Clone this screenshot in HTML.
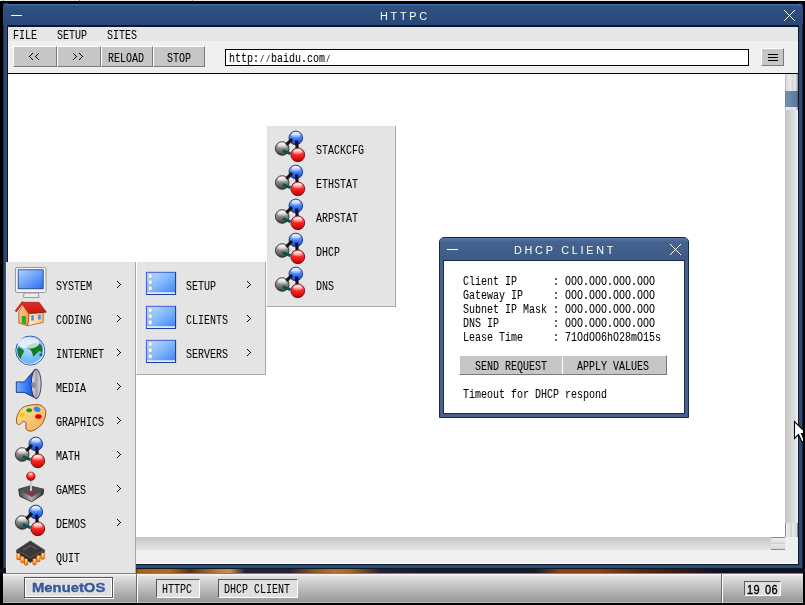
<!DOCTYPE html>
<html><head><meta charset="utf-8">
<style>
*{margin:0;padding:0;box-sizing:border-box}
html,body{width:805px;height:605px;overflow:hidden;background:#000;position:relative}
.a{position:absolute}
.t{position:absolute;font-family:"Liberation Mono",monospace;font-size:10px;line-height:10px;white-space:pre;color:#000;transform:translateY(0.5px) scaleY(1.2);transform-origin:0 0;filter:grayscale(1);-webkit-text-stroke:0.05px #000}
.z{font-family:"Liberation Sans",sans-serif;font-size:9.6px;letter-spacing:0.66px;display:inline-block;width:6px;text-align:left}
.sl{display:inline-block;width:6px;font-size:7px;line-height:7px;text-indent:1px}
.tt{position:absolute;font-family:"Liberation Sans",sans-serif;font-size:10px;line-height:10px;white-space:pre;color:#fff;letter-spacing:2.55px;transform:scaleX(1.08);transform-origin:0 0;filter:grayscale(1)}
.btn{position:absolute;background:#c6c6c6;border-top:1px solid #fff;border-left:1px solid #fff;border-right:1px solid #7a7a7a;border-bottom:1px solid #7a7a7a}
.menu{position:absolute;background:#e4e4e4;border-right:1px solid #a8a8a8;border-bottom:1px solid #a8a8a8}
.tb{position:absolute;background:linear-gradient(#2b4a7a,#2b4a7a)}
</style></head><body>
<!-- top row -->
<div class="a" style="left:0;top:0;width:805px;height:1px;background:#ededed"></div>
<div class="a" style="left:3px;top:0;width:1px;height:1px;background:#999"></div><div class="a" style="left:79px;top:0;width:1px;height:1px;background:#999"></div><div class="a" style="left:192px;top:0;width:1px;height:1px;background:#aaa"></div>
<!-- wallpaper strip -->
<div class="a" style="left:0;top:569px;width:805px;height:4px;background:linear-gradient(90deg,#101018 0,#101018 134px,#a85a18 138px,#b8681e 170px,#5a3018 190px,#b07838 215px,#c89050 230px,#2a2035 245px,#2a2035 290px,#8a5a28 315px,#b87028 335px,#a86828 350px,#2a2030 380px,#1a1a2a 420px,#181a28 535px,#8a4212 560px,#8a4212 600px,#5a2810 640px,#3a1a14 680px,#101020 720px,#101020 805px)"></div>

<!-- MAIN WINDOW -->
<div class="a" style="left:3px;top:3px;width:5px;height:5px;background:#0b3a8a"></div>
<div class="a" style="left:798px;top:3px;width:5px;height:5px;background:#02205a"></div>
<div class="a" style="left:3px;top:4px;width:800px;height:565px;background:linear-gradient(90deg,#1a2e4a 0,#1a2e4a 1px,#2c4a74 1px,#2c4a74 799px,#16243a 799px);border-radius:5px 5px 0 0"></div>
<div class="a" style="left:3px;top:568px;width:800px;height:1px;background:#0c1a2e"></div>
<div class="a" style="left:3px;top:4px;width:800px;height:21px;border-radius:4px 4px 0 0;background:linear-gradient(#3e6aa6 0,#3e6aa6 1px,#2f5283 2px,#284777 21px)"></div>
<!-- title -->
<div class="a" style="left:11px;top:15px;width:11px;height:1px;background:#fff"></div>
<div class="tt" style="left:380px;top:12px">HTTPC</div>
<svg class="a" style="left:783px;top:9px" width="13" height="13" viewBox="0 0 13 13"><path d="M1 1L12 12M12 1L1 12" stroke="#fff" stroke-width="1"/></svg>
<!-- dark inner frame -->
<div class="a" style="left:7px;top:25px;width:792px;height:540px;background:#0a1830"></div>
<!-- menubar -->
<div class="a" style="left:8px;top:27px;width:790px;height:14px;background:#e6e6e6"></div>
<div class="t" style="left:13px;top:30px">FILE</div>
<div class="t" style="left:57px;top:30px">SETUP</div>
<div class="t" style="left:107px;top:30px">SITES</div>
<!-- toolbar -->
<div class="a" style="left:8px;top:41px;width:790px;height:32px;background:#efefef"></div>
<div class="btn" style="left:13px;top:46px;width:44px;height:21px"></div>
<div class="btn" style="left:57px;top:46px;width:44px;height:21px"></div>
<div class="btn" style="left:101px;top:46px;width:52px;height:21px"></div>
<div class="btn" style="left:153px;top:46px;width:52px;height:21px"></div>
<svg class="a" style="left:0;top:0" width="805" height="605"><path d="M32 53h1v1h-1zM31 54h1v1h-1zM30 55h1v1h-1zM29 56h1v1h-1zM30 57h1v1h-1zM31 58h1v1h-1zM32 59h1v1h-1zM38 53h1v1h-1zM37 54h1v1h-1zM36 55h1v1h-1zM35 56h1v1h-1zM36 57h1v1h-1zM37 58h1v1h-1zM38 59h1v1h-1zM73 53h1v1h-1zM74 54h1v1h-1zM75 55h1v1h-1zM76 56h1v1h-1zM75 57h1v1h-1zM74 58h1v1h-1zM73 59h1v1h-1zM79 53h1v1h-1zM80 54h1v1h-1zM81 55h1v1h-1zM82 56h1v1h-1zM81 57h1v1h-1zM80 58h1v1h-1zM79 59h1v1h-1z" fill="#000"/></svg>
<div class="t" style="left:108px;top:53px">RELOAD</div>
<div class="t" style="left:167px;top:53px">STOP</div>
<div class="a" style="left:225px;top:49px;width:524px;height:17px;background:#fff;border:1px solid #000"></div>
<div class="t" style="left:229px;top:53px">http:<span class="sl">/</span><span class="sl">/</span>baidu.com<span class="sl">/</span></div>
<div class="btn" style="left:761px;top:48px;width:23px;height:18px"></div>
<div class="a" style="left:768px;top:54px;width:10px;height:1px;background:#000;box-shadow:0 0 0.6px #000"></div>
<div class="a" style="left:768px;top:57px;width:10px;height:1px;background:#000;box-shadow:0 0 0.6px #000"></div>
<div class="a" style="left:768px;top:60px;width:10px;height:1px;background:#000;box-shadow:0 0 0.6px #000"></div>
<div class="a" style="left:8px;top:73px;width:790px;height:1px;background:#000"></div>
<!-- content -->
<div class="a" style="left:8px;top:74px;width:777px;height:463px;background:#fff"></div>
<!-- vscroll -->
<div class="a" style="left:785px;top:74px;width:13px;height:463px;background:linear-gradient(90deg,#bdbdbd 0,#c8c8c8 1px,#d8d8d8 7px,#e2e2e2 11px,#f0f0f0 12px)"></div>
<div class="a" style="left:785px;top:74px;width:13px;height:17px;background:linear-gradient(90deg,#a0a0a0 0,#dcdcdc 1px,#ececec 6px,#d8d8d8 7px,#e8e8e8 11px,#a0a0a0 12px)"></div>
<div class="a" style="left:785px;top:91px;width:13px;height:16px;background:linear-gradient(90deg,#6e6e6e 0,#7290b8 1px,#5e7696 12px,#505050 13px)"></div>
<div class="a" style="left:785px;top:107px;width:13px;height:3px;background:linear-gradient(90deg,#a0a0a0 0,#f0f0f0 1px,#e0e0e0 7px,#e8e8e8 11px,#a0a0a0 12px)"></div>
<div class="a" style="left:785px;top:523px;width:13px;height:14px;background:linear-gradient(90deg,#8c8c8c 0,#8c8c8c 1px,#ececec 1px,#dedede 6px,#cfcfcf 6px,#cfcfcf 7px,#e8e8e8 7px,#d8d8d8 12px,#8c8c8c 12px)"></div>
<!-- hscroll -->
<div class="a" style="left:8px;top:537px;width:777px;height:13px;background:linear-gradient(#c4c4c4,#d6d6d6 7px,#e4e4e4 13px)"></div>
<div class="a" style="left:771px;top:537px;width:14px;height:13px;background:linear-gradient(#8c8c8c 0,#8c8c8c 1px,#ececec 1px,#dedede 6px,#cfcfcf 6px,#cfcfcf 7px,#e8e8e8 7px,#d8d8d8 12px,#8c8c8c 12px)"></div>
<div class="a" style="left:785px;top:537px;width:13px;height:13px;background:#efefef"></div>
<!-- status bar -->
<div class="a" style="left:8px;top:550px;width:790px;height:14px;background:#efefef;border-bottom:1px solid #fafafa"></div>

<!-- MENU 1 -->
<div class="menu" style="left:6px;top:262px;width:130px;height:312px;border-left:1px solid #f4f4f4"></div>
<div class="t" style="left:56px;top:281px">SYSTEM</div>
<div class="t" style="left:56px;top:315px">CODING</div>
<div class="t" style="left:56px;top:349px">INTERNET</div>
<div class="t" style="left:56px;top:383px">MEDIA</div>
<div class="t" style="left:56px;top:417px">GRAPHICS</div>
<div class="t" style="left:56px;top:451px">MATH</div>
<div class="t" style="left:56px;top:485px">GAMES</div>
<div class="t" style="left:56px;top:519px">DEMOS</div>
<div class="t" style="left:56px;top:553px">QUIT</div>

<!-- MENU 2 -->
<div class="menu" style="left:136px;top:262px;width:130px;height:113px;border-left:1px solid #fff"></div>
<div class="t" style="left:186px;top:281px">SETUP</div>
<div class="t" style="left:186px;top:315px">CLIENTS</div>
<div class="t" style="left:186px;top:349px">SERVERS</div>

<!-- MENU 3 -->
<div class="menu" style="left:266px;top:126px;width:130px;height:181px;border-left:1px solid #fff"></div>
<div class="t" style="left:316px;top:145px">STACKCFG</div>
<div class="t" style="left:316px;top:179px">ETHSTAT</div>
<div class="t" style="left:316px;top:213px">ARPSTAT</div>
<div class="t" style="left:316px;top:247px">DHCP</div>
<div class="t" style="left:316px;top:281px">DNS</div>

<!-- ICONS -->
<svg width="0" height="0" style="position:absolute">
<defs>
<radialGradient id="gBlue" cx="0.5" cy="0.22" r="0.8"><stop offset="0" stop-color="#ffffff"/><stop offset="0.18" stop-color="#b0d0ff"/><stop offset="0.5" stop-color="#4a88ff"/><stop offset="0.85" stop-color="#1848e0"/><stop offset="1" stop-color="#0a2890"/></radialGradient>
<radialGradient id="gRed" cx="0.5" cy="0.22" r="0.8"><stop offset="0" stop-color="#ffffff"/><stop offset="0.18" stop-color="#ffa0a0"/><stop offset="0.5" stop-color="#ff2a2a"/><stop offset="0.85" stop-color="#d80000"/><stop offset="1" stop-color="#780000"/></radialGradient>
<radialGradient id="gGray" cx="0.5" cy="0.22" r="0.8"><stop offset="0" stop-color="#ffffff"/><stop offset="0.2" stop-color="#d0d0d0"/><stop offset="0.55" stop-color="#787878"/><stop offset="0.9" stop-color="#404040"/><stop offset="1" stop-color="#202020"/></radialGradient>
<linearGradient id="gScreen" x1="0" y1="0" x2="1" y2="1"><stop offset="0" stop-color="#b0d4ff"/><stop offset="1" stop-color="#2a6ef0"/></linearGradient>
<linearGradient id="gFolder" x1="0" y1="0" x2="1" y2="1"><stop offset="0" stop-color="#c0e0ff"/><stop offset="0.5" stop-color="#80b8ff"/><stop offset="1" stop-color="#3a80f0"/></linearGradient>
<radialGradient id="gOcean" cx="0.45" cy="0.45" r="0.55"><stop offset="0" stop-color="#b0dcff"/><stop offset="0.85" stop-color="#6ab4f4"/><stop offset="1" stop-color="#e8f6ff"/></radialGradient>
<linearGradient id="gCone" x1="0" y1="0" x2="1" y2="0"><stop offset="0" stop-color="#70b0ff"/><stop offset="0.6" stop-color="#2a70f0"/><stop offset="1" stop-color="#0a30b0"/></linearGradient>
<linearGradient id="gFace" x1="0" y1="0" x2="1" y2="0"><stop offset="0" stop-color="#f0f0f0"/><stop offset="0.5" stop-color="#a0a0a8"/><stop offset="1" stop-color="#e0e0e0"/></linearGradient>
<linearGradient id="gPal" x1="0" y1="0" x2="1" y2="1"><stop offset="0" stop-color="#ffe0a0"/><stop offset="1" stop-color="#f0b050"/></linearGradient>
<linearGradient id="gBase" x1="0" y1="0" x2="1" y2="0"><stop offset="0" stop-color="#404040"/><stop offset="0.5" stop-color="#b0b0b0"/><stop offset="1" stop-color="#303030"/></linearGradient>
<linearGradient id="gGold" x1="0" y1="0" x2="0" y2="1"><stop offset="0" stop-color="#fff4a0"/><stop offset="0.5" stop-color="#ffd030"/><stop offset="1" stop-color="#f07000"/></linearGradient>
<linearGradient id="gWall" x1="0" y1="0" x2="1" y2="1"><stop offset="0" stop-color="#ffd090"/><stop offset="1" stop-color="#f09040"/></linearGradient>
<linearGradient id="gSide" x1="0" y1="0" x2="1" y2="0"><stop offset="0" stop-color="#fff0d8"/><stop offset="1" stop-color="#ffc070"/></linearGradient>
<linearGradient id="gRoof" x1="0" y1="0" x2="0" y2="1"><stop offset="0" stop-color="#e03020"/><stop offset="1" stop-color="#c01810"/></linearGradient>
<linearGradient id="mG" x1="0" y1="0" x2="0" y2="1"><stop offset="0" stop-color="#f0f0f0"/><stop offset="0.45" stop-color="#909090"/><stop offset="1" stop-color="#383838"/></linearGradient><linearGradient id="mB" x1="0" y1="0" x2="0" y2="1"><stop offset="0" stop-color="#b8d4ff"/><stop offset="0.45" stop-color="#4a88ff"/><stop offset="1" stop-color="#1040d8"/></linearGradient><linearGradient id="mR" x1="0" y1="0" x2="0" y2="1"><stop offset="0" stop-color="#ffc0c0"/><stop offset="0.45" stop-color="#ff2a2a"/><stop offset="1" stop-color="#c00000"/></linearGradient><linearGradient id="mH" x1="0" y1="0" x2="0" y2="1"><stop offset="0" stop-color="#fff" stop-opacity="0.95"/><stop offset="1" stop-color="#fff" stop-opacity="0.1"/></linearGradient></defs></svg>
<svg class="a" style="left:14px;top:266px" width="34" height="34" viewBox="0 0 34 34"><rect x="1.5" y="1.5" width="30.5" height="25" rx="1.5" fill="#f4f4f4" stroke="#9a9a9a" stroke-width="1"/><rect x="4.2" y="3.8" width="25" height="19" fill="url(#gScreen)" stroke="#1a3a90" stroke-width="0.8"/><path d="M10 27L24.5 27L25 31.5L9.5 31.5Z" fill="#ececec" stroke="#9a9a9a" stroke-width="1"/></svg>
<svg class="a" style="left:14px;top:300px" width="34" height="34" viewBox="0 0 34 34"><path d="M4.8 11.8L9.2 4.8L15.2 13.5L13.9 25.8L4.8 23.1Z" fill="url(#gWall)" stroke="#903010" stroke-width="0.6"/><path d="M15.2 13.5L29.2 12.5L29.2 22.4L13.9 25.8Z" fill="url(#gSide)" stroke="#903010" stroke-width="0.6"/><path d="M7.9 15.8L11.9 16.6L11.9 24.4L7.9 23.3Z" fill="#20b020"/><rect x="17.2" y="15.2" width="2.6" height="5.3" fill="#3a90f0"/><rect x="24.1" y="14.8" width="2.6" height="4.7" fill="#3a90f0"/><path d="M8.2 2.3L25.1 2.3L32.4 12.2L15.2 13.5Z" fill="url(#gRoof)" stroke="#801010" stroke-width="0.6"/><path d="M1.6 11.6L8.4 2.6L15.2 13" fill="none" stroke="#d02818" stroke-width="2.4" stroke-linejoin="round"/></svg>
<svg class="a" style="left:14px;top:334px" width="34" height="34" viewBox="0 0 34 34"><circle cx="16.3" cy="16.6" r="14.5" fill="url(#gOcean)" stroke="#2a3ab0" stroke-width="0.9"/><path d="M3.5 13C6 13.5 9 15 10 17C10 19 8 20 7.5 22C7 24 6.5 25 6 25.5C4.5 23 3 20 2.5 17Z" fill="#137a28"/><path d="M12 14C13 11 17 9.5 22 9.5C25 9.5 27 10 28 12C28.5 15 28.5 17 28 19C27 17.5 25.5 17 24.5 17.5C23 19 21 21 19.5 23C18.5 20 18 17 16 15.5C14.5 15 13 15 12 14Z" fill="#137a28"/><circle cx="27" cy="20.8" r="1.6" fill="#137a28"/><ellipse cx="14.5" cy="9" rx="11" ry="5.8" fill="#ffffff" opacity="0.72"/><path d="M11 29.2C13.5 30 17 30 19.5 29.2" stroke="#30c030" stroke-width="1.2" fill="none"/><circle cx="16.3" cy="16.6" r="13.6" fill="none" stroke="#e8f4ff" stroke-width="0.8" opacity="0.8"/></svg>
<svg class="a" style="left:14px;top:368px" width="34" height="34" viewBox="0 0 34 34"><path d="M2.3 13.9L10.2 13.9L21.1 1.3L22.4 30.4L10.2 24.4L2.3 24.4Z" fill="url(#gCone)" stroke="#0a1a60" stroke-width="0.8"/><ellipse cx="22.2" cy="15.9" rx="4.9" ry="14.7" fill="url(#gFace)" stroke="#1a1a40" stroke-width="0.8"/><ellipse cx="19.6" cy="17" rx="2.2" ry="3" fill="#8a8a9a"/></svg>
<svg class="a" style="left:14px;top:402px" width="34" height="34" viewBox="0 0 34 34"><path d="M4.6 10.6C7 6 10 4.5 12.5 4C18 2.5 24 2 27 3.5C31 5.5 32.5 9 31.7 12C31 17 29 21 27.1 23.1C23 27 19 29.5 15.8 29.1C13 28.5 11.7 27 11.9 25.8C12 23 12.5 21 11.2 19.8C10 18.8 8.5 19.5 7.9 20.5C6 23 4 23 3 21.5C1.8 19 2.5 14 4.6 10.6Z" fill="url(#gPal)" stroke="#904010" stroke-width="0.9"/><ellipse cx="7.9" cy="12.9" rx="2.8" ry="2.3" fill="#f0d000"/><ellipse cx="15.2" cy="8.2" rx="2.8" ry="2" fill="#10a010"/><ellipse cx="23.1" cy="7.3" rx="3.5" ry="2.5" fill="#3a80f0" transform="rotate(20 23.1 7.3)"/><ellipse cx="24.4" cy="14.5" rx="3.2" ry="2.3" fill="#e00000"/></svg>
<svg class="a" style="left:14px;top:436px" width="34" height="34" viewBox="0 0 34 34"><circle cx="8.2" cy="18.5" r="6.8" fill="url(#mG)" stroke="#1a1a1a" stroke-width="0.8"/><ellipse cx="8.2" cy="15.64" rx="4.22" ry="2.72" fill="url(#mH)"/><circle cx="21.8" cy="7.9" r="6.8" fill="url(#mB)" stroke="#0a1a70" stroke-width="0.8"/><ellipse cx="21.8" cy="5.04" rx="4.22" ry="2.72" fill="url(#mH)"/><path d="M12.3 14.8L18 9.2" stroke="#141414" stroke-width="3.2"/><path d="M22.6 10.5L23.2 19" stroke="#141414" stroke-width="3.2"/><path d="M8.8 20.6L16.5 23.6" stroke="#0a5252" stroke-width="3"/><circle cx="23.8" cy="24.8" r="6.9" fill="url(#mR)" stroke="#5a0000" stroke-width="0.8"/><ellipse cx="23.8" cy="21.90" rx="4.28" ry="2.76" fill="url(#mH)"/></svg>
<svg class="a" style="left:14px;top:470px" width="34" height="34" viewBox="0 0 34 34"><path d="M4.6 19.2L15.8 15.9L29.7 19.2L29 24.4L17.8 31.7L5.9 26.4Z" fill="url(#gBase)" stroke="#202020" stroke-width="0.8"/><path d="M4.6 19.2L15.8 15.9L29.7 19.2L17.8 27.1Z" fill="#505050"/><rect x="16" y="9" width="2" height="12" fill="#c8c8d0"/><ellipse cx="17.2" cy="22.8" rx="2.8" ry="1.4" fill="#e01010"/><circle cx="16.8" cy="6.3" r="4.3" fill="url(#gRed)" stroke="#600000" stroke-width="0.5"/></svg>
<svg class="a" style="left:14px;top:504px" width="34" height="34" viewBox="0 0 34 34"><circle cx="8.2" cy="18.5" r="6.8" fill="url(#mG)" stroke="#1a1a1a" stroke-width="0.8"/><ellipse cx="8.2" cy="15.64" rx="4.22" ry="2.72" fill="url(#mH)"/><circle cx="21.8" cy="7.9" r="6.8" fill="url(#mB)" stroke="#0a1a70" stroke-width="0.8"/><ellipse cx="21.8" cy="5.04" rx="4.22" ry="2.72" fill="url(#mH)"/><path d="M12.3 14.8L18 9.2" stroke="#141414" stroke-width="3.2"/><path d="M22.6 10.5L23.2 19" stroke="#141414" stroke-width="3.2"/><path d="M8.8 20.6L16.5 23.6" stroke="#0a5252" stroke-width="3"/><circle cx="23.8" cy="24.8" r="6.9" fill="url(#mR)" stroke="#5a0000" stroke-width="0.8"/><ellipse cx="23.8" cy="21.90" rx="4.28" ry="2.76" fill="url(#mH)"/></svg>
<svg class="a" style="left:14px;top:538px" width="34" height="34" viewBox="0 0 34 34"><path d="M2.5 12.1L2.5 14.6L16.3 24.7L30.6 14.6L30.6 12.1L16.3 3.1Z" fill="#2a2a2a" stroke="#5a5a5a" stroke-width="0.7"/><rect x="2.9" y="15.3" width="3.2" height="6.4" rx="1.2" fill="url(#gGold)" stroke="#d03000" stroke-width="0.7"/><rect x="6.800000000000001" y="18.400000000000002" width="3.2" height="6.4" rx="1.2" fill="url(#gGold)" stroke="#d03000" stroke-width="0.7"/><rect x="10.5" y="20.7" width="3.2" height="6.4" rx="1.2" fill="url(#gGold)" stroke="#d03000" stroke-width="0.7"/><rect x="18.9" y="20.400000000000002" width="3.2" height="6.4" rx="1.2" fill="url(#gGold)" stroke="#d03000" stroke-width="0.7"/><rect x="22.799999999999997" y="17.3" width="3.2" height="6.4" rx="1.2" fill="url(#gGold)" stroke="#d03000" stroke-width="0.7"/><rect x="27.099999999999998" y="14.8" width="3.2" height="6.4" rx="1.2" fill="url(#gGold)" stroke="#d03000" stroke-width="0.7"/><path d="M2.5 12.1L16.3 3.1L30.6 12.1L16.3 19.7Z" fill="#383838" stroke="#6a6a6a" stroke-width="0.8"/><path d="M9 12L16.5 7.5L23 11.5" stroke="#555" stroke-width="1.5" fill="none"/></svg>
<svg class="a" style="left:144px;top:266px" width="34" height="34" viewBox="0 0 34 34"><rect x="2.4" y="6.3" width="29.2" height="22.2" fill="url(#gFolder)" stroke="#3050d8" stroke-width="0.9"/><path d="M31.6 6.3V28.5H2.4" stroke="#1838a8" stroke-width="0.9" fill="none"/><rect x="3" y="26.3" width="28" height="1.6" fill="#f4f0ea"/><rect x="4.4" y="8" width="3.6" height="4.2" rx="0.8" fill="#fafafa" stroke="#a09a94" stroke-width="0.5"/><rect x="4.4" y="14.1" width="3.6" height="4.2" rx="0.8" fill="#fafafa" stroke="#a09a94" stroke-width="0.5"/><rect x="4.4" y="20.2" width="3.6" height="4.2" rx="0.8" fill="#fafafa" stroke="#a09a94" stroke-width="0.5"/></svg>
<svg class="a" style="left:144px;top:300px" width="34" height="34" viewBox="0 0 34 34"><rect x="2.4" y="6.3" width="29.2" height="22.2" fill="url(#gFolder)" stroke="#3050d8" stroke-width="0.9"/><path d="M31.6 6.3V28.5H2.4" stroke="#1838a8" stroke-width="0.9" fill="none"/><rect x="3" y="26.3" width="28" height="1.6" fill="#f4f0ea"/><rect x="4.4" y="8" width="3.6" height="4.2" rx="0.8" fill="#fafafa" stroke="#a09a94" stroke-width="0.5"/><rect x="4.4" y="14.1" width="3.6" height="4.2" rx="0.8" fill="#fafafa" stroke="#a09a94" stroke-width="0.5"/><rect x="4.4" y="20.2" width="3.6" height="4.2" rx="0.8" fill="#fafafa" stroke="#a09a94" stroke-width="0.5"/></svg>
<svg class="a" style="left:144px;top:334px" width="34" height="34" viewBox="0 0 34 34"><rect x="2.4" y="6.3" width="29.2" height="22.2" fill="url(#gFolder)" stroke="#3050d8" stroke-width="0.9"/><path d="M31.6 6.3V28.5H2.4" stroke="#1838a8" stroke-width="0.9" fill="none"/><rect x="3" y="26.3" width="28" height="1.6" fill="#f4f0ea"/><rect x="4.4" y="8" width="3.6" height="4.2" rx="0.8" fill="#fafafa" stroke="#a09a94" stroke-width="0.5"/><rect x="4.4" y="14.1" width="3.6" height="4.2" rx="0.8" fill="#fafafa" stroke="#a09a94" stroke-width="0.5"/><rect x="4.4" y="20.2" width="3.6" height="4.2" rx="0.8" fill="#fafafa" stroke="#a09a94" stroke-width="0.5"/></svg>
<svg class="a" style="left:274px;top:130px" width="34" height="34" viewBox="0 0 34 34"><circle cx="8.2" cy="18.5" r="6.8" fill="url(#mG)" stroke="#1a1a1a" stroke-width="0.8"/><ellipse cx="8.2" cy="15.64" rx="4.22" ry="2.72" fill="url(#mH)"/><circle cx="21.8" cy="7.9" r="6.8" fill="url(#mB)" stroke="#0a1a70" stroke-width="0.8"/><ellipse cx="21.8" cy="5.04" rx="4.22" ry="2.72" fill="url(#mH)"/><path d="M12.3 14.8L18 9.2" stroke="#141414" stroke-width="3.2"/><path d="M22.6 10.5L23.2 19" stroke="#141414" stroke-width="3.2"/><path d="M8.8 20.6L16.5 23.6" stroke="#0a5252" stroke-width="3"/><circle cx="23.8" cy="24.8" r="6.9" fill="url(#mR)" stroke="#5a0000" stroke-width="0.8"/><ellipse cx="23.8" cy="21.90" rx="4.28" ry="2.76" fill="url(#mH)"/></svg>
<svg class="a" style="left:274px;top:164px" width="34" height="34" viewBox="0 0 34 34"><circle cx="8.2" cy="18.5" r="6.8" fill="url(#mG)" stroke="#1a1a1a" stroke-width="0.8"/><ellipse cx="8.2" cy="15.64" rx="4.22" ry="2.72" fill="url(#mH)"/><circle cx="21.8" cy="7.9" r="6.8" fill="url(#mB)" stroke="#0a1a70" stroke-width="0.8"/><ellipse cx="21.8" cy="5.04" rx="4.22" ry="2.72" fill="url(#mH)"/><path d="M12.3 14.8L18 9.2" stroke="#141414" stroke-width="3.2"/><path d="M22.6 10.5L23.2 19" stroke="#141414" stroke-width="3.2"/><path d="M8.8 20.6L16.5 23.6" stroke="#0a5252" stroke-width="3"/><circle cx="23.8" cy="24.8" r="6.9" fill="url(#mR)" stroke="#5a0000" stroke-width="0.8"/><ellipse cx="23.8" cy="21.90" rx="4.28" ry="2.76" fill="url(#mH)"/></svg>
<svg class="a" style="left:274px;top:198px" width="34" height="34" viewBox="0 0 34 34"><circle cx="8.2" cy="18.5" r="6.8" fill="url(#mG)" stroke="#1a1a1a" stroke-width="0.8"/><ellipse cx="8.2" cy="15.64" rx="4.22" ry="2.72" fill="url(#mH)"/><circle cx="21.8" cy="7.9" r="6.8" fill="url(#mB)" stroke="#0a1a70" stroke-width="0.8"/><ellipse cx="21.8" cy="5.04" rx="4.22" ry="2.72" fill="url(#mH)"/><path d="M12.3 14.8L18 9.2" stroke="#141414" stroke-width="3.2"/><path d="M22.6 10.5L23.2 19" stroke="#141414" stroke-width="3.2"/><path d="M8.8 20.6L16.5 23.6" stroke="#0a5252" stroke-width="3"/><circle cx="23.8" cy="24.8" r="6.9" fill="url(#mR)" stroke="#5a0000" stroke-width="0.8"/><ellipse cx="23.8" cy="21.90" rx="4.28" ry="2.76" fill="url(#mH)"/></svg>
<svg class="a" style="left:274px;top:232px" width="34" height="34" viewBox="0 0 34 34"><circle cx="8.2" cy="18.5" r="6.8" fill="url(#mG)" stroke="#1a1a1a" stroke-width="0.8"/><ellipse cx="8.2" cy="15.64" rx="4.22" ry="2.72" fill="url(#mH)"/><circle cx="21.8" cy="7.9" r="6.8" fill="url(#mB)" stroke="#0a1a70" stroke-width="0.8"/><ellipse cx="21.8" cy="5.04" rx="4.22" ry="2.72" fill="url(#mH)"/><path d="M12.3 14.8L18 9.2" stroke="#141414" stroke-width="3.2"/><path d="M22.6 10.5L23.2 19" stroke="#141414" stroke-width="3.2"/><path d="M8.8 20.6L16.5 23.6" stroke="#0a5252" stroke-width="3"/><circle cx="23.8" cy="24.8" r="6.9" fill="url(#mR)" stroke="#5a0000" stroke-width="0.8"/><ellipse cx="23.8" cy="21.90" rx="4.28" ry="2.76" fill="url(#mH)"/></svg>
<svg class="a" style="left:274px;top:266px" width="34" height="34" viewBox="0 0 34 34"><circle cx="8.2" cy="18.5" r="6.8" fill="url(#mG)" stroke="#1a1a1a" stroke-width="0.8"/><ellipse cx="8.2" cy="15.64" rx="4.22" ry="2.72" fill="url(#mH)"/><circle cx="21.8" cy="7.9" r="6.8" fill="url(#mB)" stroke="#0a1a70" stroke-width="0.8"/><ellipse cx="21.8" cy="5.04" rx="4.22" ry="2.72" fill="url(#mH)"/><path d="M12.3 14.8L18 9.2" stroke="#141414" stroke-width="3.2"/><path d="M22.6 10.5L23.2 19" stroke="#141414" stroke-width="3.2"/><path d="M8.8 20.6L16.5 23.6" stroke="#0a5252" stroke-width="3"/><circle cx="23.8" cy="24.8" r="6.9" fill="url(#mR)" stroke="#5a0000" stroke-width="0.8"/><ellipse cx="23.8" cy="21.90" rx="4.28" ry="2.76" fill="url(#mH)"/></svg>
<!-- /ICONS -->
<svg class="a" style="left:0;top:0" width="805" height="605"><path d="M117 281h1v1h-1zM118 282h1v1h-1zM119 283h1v1h-1zM120 284h1v1h-1zM119 285h1v1h-1zM118 286h1v1h-1zM117 287h1v1h-1zM117 315h1v1h-1zM118 316h1v1h-1zM119 317h1v1h-1zM120 318h1v1h-1zM119 319h1v1h-1zM118 320h1v1h-1zM117 321h1v1h-1zM117 349h1v1h-1zM118 350h1v1h-1zM119 351h1v1h-1zM120 352h1v1h-1zM119 353h1v1h-1zM118 354h1v1h-1zM117 355h1v1h-1zM117 383h1v1h-1zM118 384h1v1h-1zM119 385h1v1h-1zM120 386h1v1h-1zM119 387h1v1h-1zM118 388h1v1h-1zM117 389h1v1h-1zM117 417h1v1h-1zM118 418h1v1h-1zM119 419h1v1h-1zM120 420h1v1h-1zM119 421h1v1h-1zM118 422h1v1h-1zM117 423h1v1h-1zM117 451h1v1h-1zM118 452h1v1h-1zM119 453h1v1h-1zM120 454h1v1h-1zM119 455h1v1h-1zM118 456h1v1h-1zM117 457h1v1h-1zM117 485h1v1h-1zM118 486h1v1h-1zM119 487h1v1h-1zM120 488h1v1h-1zM119 489h1v1h-1zM118 490h1v1h-1zM117 491h1v1h-1zM117 519h1v1h-1zM118 520h1v1h-1zM119 521h1v1h-1zM120 522h1v1h-1zM119 523h1v1h-1zM118 524h1v1h-1zM117 525h1v1h-1zM247 281h1v1h-1zM248 282h1v1h-1zM249 283h1v1h-1zM250 284h1v1h-1zM249 285h1v1h-1zM248 286h1v1h-1zM247 287h1v1h-1zM247 315h1v1h-1zM248 316h1v1h-1zM249 317h1v1h-1zM250 318h1v1h-1zM249 319h1v1h-1zM248 320h1v1h-1zM247 321h1v1h-1zM247 349h1v1h-1zM248 350h1v1h-1zM249 351h1v1h-1zM250 352h1v1h-1zM249 353h1v1h-1zM248 354h1v1h-1zM247 355h1v1h-1z" fill="#000"/></svg>
<!-- DHCP DIALOG -->
<div class="a" style="left:439px;top:237px;width:250px;height:181px;background:#46618c;border:1px solid #1a2a40;border-radius:5px 5px 0 0"></div>
<div class="a" style="left:440px;top:238px;width:248px;height:22px;border-radius:4px 4px 0 0;background:linear-gradient(#5a7aa8,#46638f 4px,#3e5a86)"></div>
<div class="a" style="left:443px;top:260px;width:242px;height:154px;background:#1a2a40"></div>
<div class="a" style="left:444px;top:261px;width:240px;height:152px;background:#fff"></div>
<div class="a" style="left:447px;top:249px;width:11px;height:1px;background:#fff"></div>
<div class="tt" style="left:514px;top:246px">DHCP CLIENT</div>
<svg class="a" style="left:669px;top:243px" width="13" height="13" viewBox="0 0 13 13"><path d="M1 1L12 12M12 1L1 12" stroke="#fff" stroke-width="1"/></svg>
<div class="t" style="left:463px;top:276px">Client IP      : OOO.OOO.OOO.OOO</div>
<div class="t" style="left:463px;top:290px">Gateway IP     : OOO.OOO.OOO.OOO</div>
<div class="t" style="left:463px;top:304px">Subnet IP Mask : OOO.OOO.OOO.OOO</div>
<div class="t" style="left:463px;top:318px">DNS IP         : OOO.OOO.OOO.OOO</div>
<div class="t" style="left:463px;top:332px">Lease Time     : 71OdOO6hO28mO15s</div>
<div class="btn" style="left:459px;top:355px;width:104px;height:20px"></div>
<div class="btn" style="left:562px;top:355px;width:105px;height:20px"></div>
<div class="t" style="left:475px;top:361px">SEND REQUEST</div>
<div class="t" style="left:577px;top:361px">APPLY VALUES</div>
<div class="t" style="left:463px;top:389px">Timeout for DHCP respond</div>

<!-- TASKBAR -->
<div class="a" style="left:3px;top:573px;width:800px;height:30px;border-top:1px solid #7e7e7e;border-bottom:1px solid #bababa;background:linear-gradient(#f4f4f4 0,#f4f4f4 1px,#e2e2e2 2px,#bebebe 14px,#979797 28px)"></div>
<div class="a" style="left:24px;top:577px;width:89px;height:21px;border:1px solid #555;box-shadow:inset 1px 1px 0 #fff,inset -1px -1px 0 #fff,1px 1px 0 #fff;background:#e0e0e0"></div>
<div class="a" style="left:32px;top:580px;font-family:'Liberation Sans';font-weight:bold;font-size:13px;line-height:15px;color:#38589a;-webkit-text-stroke:0.4px #38589a;transform:scaleX(1.14);transform-origin:0 0;filter:grayscale(0)">MenuetOS</div>
<div class="a" style="left:136px;top:574px;width:1px;height:29px;background:#6a6a6a"></div>
<div class="a" style="left:137px;top:574px;width:1px;height:29px;background:#fff"></div>
<div class="a" style="left:156px;top:579px;width:44px;height:19px;border-top:1px solid #5a5a5a;border-left:1px solid #5a5a5a;border-right:1px solid #fff;border-bottom:1px solid #fff;background:#e0e0e0"></div>
<div class="t" style="left:162px;top:584px">HTTPC</div>
<div class="a" style="left:218px;top:579px;width:80px;height:19px;border-top:1px solid #5a5a5a;border-left:1px solid #5a5a5a;border-right:1px solid #fff;border-bottom:1px solid #fff;background:#e0e0e0"></div>
<div class="t" style="left:224px;top:584px">DHCP CLIENT</div>
<div class="a" style="left:721px;top:574px;width:1px;height:29px;background:#6a6a6a"></div>
<div class="a" style="left:722px;top:574px;width:1px;height:29px;background:#fff"></div>
<div class="a" style="left:744px;top:581px;width:37px;height:15px;border-top:1px solid #5a5a5a;border-left:1px solid #5a5a5a;border-right:1px solid #fff;border-bottom:1px solid #fff;background:#dedede"></div>
<div class="a" style="left:747px;top:583px;font-family:'Liberation Sans';font-size:11px;line-height:13px;letter-spacing:0.3px;white-space:pre;color:#000;filter:grayscale(1);transform:scaleY(1.1);-webkit-text-stroke:0.3px #000;transform-origin:0 0">19</div>
<div class="a" style="left:765px;top:583px;font-family:'Liberation Sans';font-size:11px;line-height:13px;letter-spacing:0.3px;white-space:pre;color:#000;filter:grayscale(1);transform:scaleY(1.1);-webkit-text-stroke:0.3px #000;transform-origin:0 0">06</div>

<!-- cursor -->
<svg class="a" style="left:793px;top:420px" width="10" height="23" viewBox="0 0 10 23"><path d="M1.5 1.5L1.5 18.5L5.5 14.5L9 22L11.5 21L8.5 13.5L13.5 13.5Z" fill="#fff" stroke="#000" stroke-width="1.1"/></svg>
</body></html>
